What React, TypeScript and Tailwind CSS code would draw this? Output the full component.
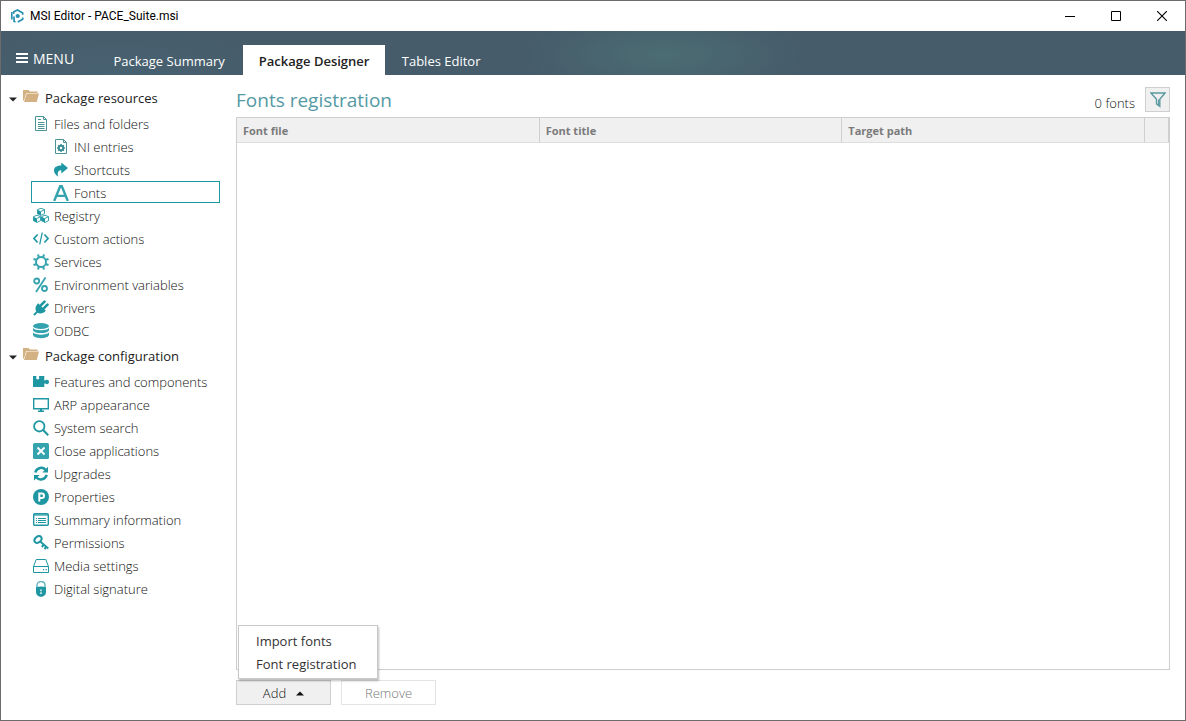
import { useState } from "react";
import type { ReactNode } from "react";

const teal = "#1f97a3";

function Svg({ children, size = 16 }: { children: ReactNode; size?: number }) {
  return (
    <svg width={size} height={size} viewBox={`0 0 ${size} ${size}`} fill="none" stroke="none" aria-hidden="true">
      {children}
    </svg>
  );
}

function Cube({ x, y }: { x: number; y: number }) {
  return (
    <g transform={`translate(${x} ${y})`}>
      <path d="M4 .5L7.500 2V6L4 7.700L.5 6V2Z" fill="#fff" stroke={teal} strokeWidth=".9" />
      <path d="M.5 2L4 3.700V7.700L.5 6Z" fill={teal} />
      <path d="M4 3.700L7.500 2" stroke={teal} strokeWidth=".9" />
    </g>
  );
}

const icons: Record<string, ReactNode> = {
  files: (
    <Svg>
      <path d="M2.500 .5H10.500L13.500 3.500V14.500H2.500Z" stroke="#4a9397" />
      <path d="M10.500 .5V3.500H13.500M5 3.500H8M5 6.500H11.500M5 8.500H11.500M5 10.500H11.500M5 12.500H11.500" stroke="#4a9397" />
    </Svg>
  ),
  ini: (
    <Svg>
      <path d="M2.500 .5H10.500L13.500 3.500V14.500H2.500Z M10.500 .5V3.500H13.500" stroke="#4a9397" />
      <circle cx="8" cy="9" r="2.200" stroke="#3b8d93" strokeWidth="1.900" />
      <path d="M8 5V6.500M8 11.500V13M4 9H5.500M10.500 9H12M5.200 6.200L6.300 7.300M9.700 10.700L10.800 11.800M10.800 6.200L9.700 7.300M6.300 10.700L5.200 11.800" stroke="#3b8d93" strokeWidth="1.500" />
    </Svg>
  ),
  shortcuts: (
    <Svg>
      <path d="M8.300 .5L15 6L8.300 11.500V8.300C4.800 8.300 4.300 10.500 5.200 14.800C2.500 12.600 1 10.800 1 8.500C1 5 4 3.700 8.300 3.600Z" fill={teal} />
    </Svg>
  ),
  fonts: (
    <Svg>
      <path d="M1.200 16L7.200 1.200H8.800L14.800 16M3.600 10.900H12.400" stroke="#35a3ae" strokeWidth="2.400" />
    </Svg>
  ),
  registry: (
    <Svg>
      <Cube x={4} y={-0.3} />
      <Cube x={0} y={6.700} />
      <Cube x={8} y={6.700} />
    </Svg>
  ),
  code: (
    <Svg>
      <path d="M4.600 3.500L1 7.500L4.600 11.500M11.400 3.500L15 7.500L11.400 11.500" stroke={teal} strokeWidth="1.700" />
      <path d="M9.300 1.500L6.700 13.500" stroke={teal} strokeWidth="1.200" />
    </Svg>
  ),
  gear: (
    <Svg>
      <circle cx="8" cy="8" r="5" stroke="#35a3ae" strokeWidth="1.900" />
      <path d="M5.800 3L5 .5M10.200 3L11 .5M5.800 13L5 15.500M10.200 13L11 15.500M3 5.800L.5 5M3 10.200L.5 11M13 5.800L15.500 5M13 10.200L15.500 11" stroke="#35a3ae" strokeWidth="2.100" />
    </Svg>
  ),
  percent: (
    <Svg>
      <circle cx="3.700" cy="4" r="2.500" stroke="#35a3ae" strokeWidth="1.800" />
      <circle cx="11.500" cy="11.500" r="2.500" stroke="#35a3ae" strokeWidth="1.800" />
      <path d="M12.500 .6L3 15" stroke="#35a3ae" strokeWidth="1.800" />
    </Svg>
  ),
  plug: (
    <Svg>
      <path d="M5.200 3.200L12.800 10.800C10.500 13.600 7 14.200 4.600 12.800L1.700 15.700L.3 14.300L3.200 11.400C1.800 9 2.400 5.500 5.200 3.200Z" fill={teal} />
      <path d="M7.500 5.600L11.500 1.600M10.500 8.600L14.500 4.600" stroke={teal} strokeWidth="2.600" strokeLinecap="round" />
    </Svg>
  ),
  database: (
    <Svg>
      <ellipse cx="8" cy="3" rx="8" ry="3" fill="#35a3ae" />
      <path d="M0 5C2 8 14 8 16 5V7.200C14.500 11 1.500 11 0 7.200Z" fill="#35a3ae" />
      <path d="M0 9.600C2 12.300 14 12.300 16 9.600V12C14.500 16.200 1.500 16.200 0 12Z" fill="#35a3ae" />
    </Svg>
  ),
  puzzle: (
    <Svg>
      <path d="M0 2H3.300C3.700 2.800 3.200 3 3.200 4.200C3.200 5.800 6.200 5.800 6.200 4.200C6.200 3 5.700 2.800 6.200 2H11.300V6.300C12.500 7 12.700 5.800 14 5.800C16.700 5.800 16.700 10.200 14 10.200C12.700 10.200 12.500 9 11.300 9.700V13H0Z" fill={teal} />
    </Svg>
  ),
  monitor: (
    <Svg>
      <path d="M.7 1.700H15.300V11.800H.7Z" stroke={teal} strokeWidth="1.400" />
      <path d="M7 12H9V13.500H11V15H5V13.500H7Z" fill={teal} />
    </Svg>
  ),
  search: (
    <Svg>
      <circle cx="6.300" cy="6.300" r="5.200" stroke={teal} strokeWidth="1.800" />
      <path d="M10.100 10.100L15.200 15.200" stroke={teal} strokeWidth="2.100" />
    </Svg>
  ),
  close: (
    <Svg>
      <rect width="16" height="16" rx="1.500" fill="#35a3ae" />
      <path d="M4.500 4.500L11.500 11.500M11.500 4.500L4.500 11.500" stroke="#fff" strokeWidth="1.900" />
    </Svg>
  ),
  refresh: (
    <Svg>
      <path d="M2.300 6.500C3.800 1.300 9.800 .6 12.500 3.800M13.700 8.800C12.200 14 6.200 14.700 3.500 11.500" stroke={teal} strokeWidth="2.500" />
      <path d="M15 .7V6.400H9.300ZM1 14.600V8.900H6.700Z" fill={teal} />
    </Svg>
  ),
  properties: (
    <Svg>
      <circle cx="8" cy="8" r="8" fill={teal} />
      <path d="M6.300 12.500V4.500H8.600C11.800 4.500 11.800 9 8.600 9H6.300" stroke="#fff" strokeWidth="2" />
    </Svg>
  ),
  summary: (
    <Svg>
      <rect x=".7" y="1.700" width="14.600" height="11.600" rx="1" stroke={teal} strokeWidth="1.400" />
      <path d="M1 3H15" stroke={teal} strokeWidth="1.200" />
      <path d="M5 6.500H13M5 8.500H13M5 10.500H13M3 6.500H4M3 8.500H4M3 10.500H4" stroke={teal} />
    </Svg>
  ),
  key: (
    <Svg>
      <ellipse cx="5" cy="4.500" rx="4" ry="2.900" transform="rotate(-38 5 4.500)" stroke={teal} strokeWidth="2.100" />
      <path d="M7.200 6.500L15.300 13.400M10.700 9.700L8.800 12M13.200 11.800L11.500 14.200" stroke={teal} strokeWidth="2" />
    </Svg>
  ),
  media: (
    <Svg>
      <path d="M3.200 1.500H12.800L15.500 8.500V14.500H.5V8.500Z M.5 8.500H15.500" stroke={teal} />
      <path d="M10 11H11.200V12.200H10ZM12.600 11H13.800V12.200H12.600Z" fill={teal} />
    </Svg>
  ),
  lock: (
    <Svg>
      <path d="M4 8V4.500C4 -.8 12 -.8 12 4.500V8" stroke="#5fb3bb" strokeWidth="1.400" />
      <path d="M3 6.200C6 5.400 10 5.400 13 6.200V11C13 17.400 3 17.400 3 11Z" fill={teal} />
      <path d="M7.100 8.500H8.900V10.200H7.100ZM7.100 11.200H8.900V12.900H7.100Z" fill="#c9e7ea" />
    </Svg>
  ),
};

type Item = { label: string; icon: string; nested?: boolean };

const groups: { title: string; items: Item[] }[] = [
  {
    title: "Package resources",
    items: [
      { label: "Files and folders", icon: "files" },
      { label: "INI entries", icon: "ini", nested: true },
      { label: "Shortcuts", icon: "shortcuts", nested: true },
      { label: "Fonts", icon: "fonts", nested: true },
      { label: "Registry", icon: "registry" },
      { label: "Custom actions", icon: "code" },
      { label: "Services", icon: "gear" },
      { label: "Environment variables", icon: "percent" },
      { label: "Drivers", icon: "plug" },
      { label: "ODBC", icon: "database" },
    ],
  },
  {
    title: "Package configuration",
    items: [
      { label: "Features and components", icon: "puzzle" },
      { label: "ARP appearance", icon: "monitor" },
      { label: "System search", icon: "search" },
      { label: "Close applications", icon: "close" },
      { label: "Upgrades", icon: "refresh" },
      { label: "Properties", icon: "properties" },
      { label: "Summary information", icon: "summary" },
      { label: "Permissions", icon: "key" },
      { label: "Media settings", icon: "media" },
      { label: "Digital signature", icon: "lock" },
    ],
  },
];

function TitleBar() {
  return (
    <div className="flex h-[30px] items-center pl-[9px]">
      <Svg size={14}>
        <path d="M1.800 3V10.500M4 7.500V12.300L5.500 13.100" stroke="#2a8fb0" strokeWidth="1.700" />
        <path d="M3.800 4.800V2.800L7.500 1L12.700 3.900V5.800M12.700 8.500V10.200L7.800 13" stroke="#2a8fb0" strokeWidth="1.700" />
        <circle cx="7.700" cy="7" r="2.100" fill="#2a8fb0" />
      </Svg>
      <span className="ml-1.5 flex-1 font-[Roboto,sans-serif] text-[12px] text-black">MSI Editor - PACE_Suite.msi</span>
      <button aria-label="Minimize" className="flex h-full w-[46px] items-center justify-center">
        <Svg size={10}><path d="M0 5.500H10" stroke="#000" /></Svg>
      </button>
      <button aria-label="Maximize" className="flex h-full w-[46px] items-center justify-center">
        <Svg size={10}><path d="M.5 .5H9.500V9.500H.5Z" stroke="#000" /></Svg>
      </button>
      <button aria-label="Close" className="flex h-full w-[46px] items-center justify-center">
        <Svg size={10}><path d="M0 0L10 10M10 0L0 10" stroke="#000" strokeWidth="1.100" /></Svg>
      </button>
    </div>
  );
}

function Header() {
  return (
    <header className="flex h-11 items-end bg-[#465c6a] bg-[radial-gradient(ellipse_140px_42px_at_56%_55%,#4b6d73,transparent),radial-gradient(ellipse_140px_50px_at_10%_100%,#486272,transparent)] text-[13px] text-white">
      <button className="flex h-8 items-center gap-[5px] pb-0.5 pl-[15px] text-[14px]">
        <Svg size={12}><path d="M0 2H12M0 6H12M0 10H12" stroke="#fff" strokeWidth="2" /></Svg>
        MENU
      </button>
      <nav className="ml-[23px] flex h-[30px]">
        <button className="w-[146px] pt-1 pr-0.5">Package Summary</button>
        <button className="w-[142px] bg-white pt-1 font-semibold text-[#222]">Package Designer</button>
        <button className="w-[112px] pt-1">Tables Editor</button>
      </nav>
    </header>
  );
}

function Sidebar({ selected, onSelect }: { selected: string; onSelect: (s: string) => void }) {
  return (
    <nav className="w-[219px] shrink-0 pt-[9px] pl-2">
      {groups.map((group) => (
        <section key={group.title}>
          <h2 className="flex h-7 items-center text-[13px] text-[#222]">
            <Svg size={8}><path d="M0 3.500H8L4 7.500Z" fill="#222" /></Svg>
            <span className="mr-1.5 ml-1.5 -mt-1">
              <Svg>
                <path d="M0 2H5.500L7 3.500H14.500V5H3.200L1 12.500H0Z" fill="#d3b182" />
                <path d="M3.700 5.500H16L13.800 14H1Z" fill="#d3b182" />
              </Svg>
            </span>
            <span className="pt-0.5">{group.title}</span>
          </h2>
          <ul className="pl-[22px]">
            {group.items.map((item) => (
              <li key={item.label} className="h-[23px]">
                <button
                  onClick={() => onSelect(item.label)}
                  className={`flex h-[22px] w-full items-center border text-left text-[13px] font-light text-[#111] ${
                    item.nested ? "pl-[21px]" : "pl-px"
                  } ${selected === item.label ? "border-[#1f97a3]" : "border-transparent"}`}
                >
                  <span className="mr-[5px] flex w-4 shrink-0 items-center justify-center pt-0.5">{icons[item.icon]}</span>
                  <span className="pt-[3px]">{item.label}</span>
                </button>
              </li>
            ))}
          </ul>
        </section>
      ))}
    </nav>
  );
}

function FontsPanel() {
  const [menuOpen, setMenuOpen] = useState(true);
  const th = "border-r border-[#cfcfcf] px-1.5 pt-0.5 text-left font-bold";
  return (
    <main className="flex min-w-0 flex-1 flex-col pt-3 pr-[15px] pb-[15px] pl-4">
      <div className="flex h-[30px] items-start">
        <h1 className="flex-1 text-[19px] leading-[26px] text-[#5499a4]">Fonts registration</h1>
        <span className="mr-2.5 text-[13px] leading-8 font-light text-[#111]">0 fonts</span>
        <button aria-label="Filter" className="flex h-[25px] w-[25px] items-center justify-center border border-[#cfcfcf] bg-[#f0f0f0]">
          <Svg>
            <path d="M1 1H15L9.800 7.200V14.300L6.500 11.800V7.200Z" stroke="#5b9aa0" strokeWidth="1.400" />
            <path d="M8.500 7.500V13" stroke="#5b9aa0" />
          </Svg>
        </button>
      </div>
      <div className="flex-1 border border-[#cfcfcf]">
        <table className="w-full table-fixed border-separate border-spacing-0 text-[11px] text-[#7b7b7b]">
          <thead>
            <tr className="h-[25px] bg-[#f0f0f0] [&>th]:border-b [&>th]:border-b-[#dedede]">
              <th className={th}>Font file</th>
              <th className={th}>Font title</th>
              <th className={th}>Target path</th>
              <th aria-label="Options" className="w-6 border-r border-[#cfcfcf]" />
            </tr>
          </thead>
          <tbody />
        </table>
      </div>
      <div className="mt-2.5 flex gap-2.5 text-[13px] font-light">
        <div className="relative">
          <button
            aria-expanded={menuOpen}
            onClick={() => setMenuOpen(!menuOpen)}
            className="flex h-[25px] w-[95px] items-center justify-center gap-2.5 border border-[#cfcfcf] bg-[#f0f0f0] pt-0.5 text-[#111]"
          >
            Add
            <Svg size={8}><path d="M0 5.500H8L4 1.500Z" fill="#111" /></Svg>
          </button>
          {menuOpen && (
            <ul role="menu" className="absolute bottom-full left-0.5 mb-px w-[140px] border border-[#c8c8c8] bg-white pt-1 pb-0.5 font-normal text-[#333] shadow-[1px_2px_2px_rgba(0,0,0,0.25)]">
              <li><button role="menuitem" className="block h-[23px] w-full pl-[17px] text-left">Import fonts</button></li>
              <li><button role="menuitem" className="block h-[23px] w-full pl-[17px] text-left">Font registration</button></li>
            </ul>
          )}
        </div>
        <button disabled className="h-[25px] w-[95px] border border-[#e4e4e4] pt-0.5 text-[#777]">Remove</button>
      </div>
    </main>
  );
}

export default function App() {
  const [selected, setSelected] = useState("Fonts");
  return (
    <div className="flex min-h-screen flex-col border border-[#6b6b6b] bg-white font-['Open_Sans',sans-serif]">
      <TitleBar />
      <Header />
      <div className="flex flex-1">
        <Sidebar selected={selected} onSelect={setSelected} />
        <FontsPanel />
      </div>
    </div>
  );
}
